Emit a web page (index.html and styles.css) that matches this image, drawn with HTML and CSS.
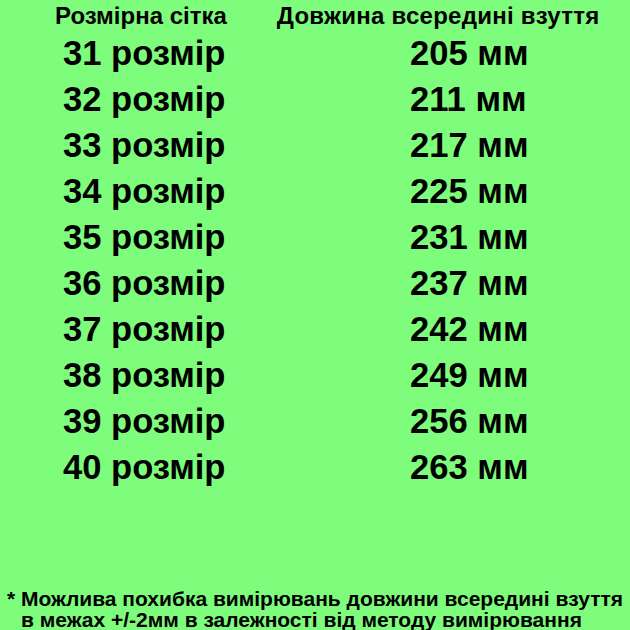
FILE: index.html
```html
<!DOCTYPE html>
<html lang="uk">
<head>
<meta charset="utf-8">
<link rel="stylesheet" href="styles.css">
</head>
<body>
<div class="page">
  <div class="head">
    <span class="h h-left">Розмірна сітка</span>
    <span class="h h-right">Довжина всередині взуття</span>
  </div>
  <div class="table">
    <div class="size">31 розмір</div><div class="len">205 мм</div>
    <div class="size">32 розмір</div><div class="len">211 мм</div>
    <div class="size">33 розмір</div><div class="len">217 мм</div>
    <div class="size">34 розмір</div><div class="len">225 мм</div>
    <div class="size">35 розмір</div><div class="len">231 мм</div>
    <div class="size">36 розмір</div><div class="len">237 мм</div>
    <div class="size">37 розмір</div><div class="len">242 мм</div>
    <div class="size">38 розмір</div><div class="len">249 мм</div>
    <div class="size">39 розмір</div><div class="len">256 мм</div>
    <div class="size">40 розмір</div><div class="len">263 мм</div>
  </div>
  <div class="note">
    <div class="n1">* Можлива похибка вимірювань довжини всередині взуття</div>
    <div class="n2">в межах +/-2мм в залежності від методу вимірювання</div>
  </div>
</div>
</body>
</html>
```
FILE: styles.css
```css
html, body {
  margin: 0;
  padding: 0;
  background: #7dfd7b;
}
.page {
  width: 630px;
  height: 630px;
  overflow: hidden;
  position: relative;
  font-family: "Liberation Sans", Arial, sans-serif;
  font-weight: bold;
  color: #000;
}
.head {
  display: flex;
  padding-left: 55px;
  padding-top: 3px;
  font-size: 24px;
  line-height: 26px;
  white-space: nowrap;
}
.h-right {
  margin-left: 50px;
  letter-spacing: 0.25px;
}
.table {
  display: grid;
  grid-template-columns: 347px auto;
  grid-auto-rows: 46px;
  padding-left: 63px;
  margin-top: 1px;
  font-size: 34.6px;
  line-height: 46px;
}
.note {
  position: absolute;
  left: 7px;
  top: 588px;
  font-size: 21px;
  line-height: 21px;
  white-space: nowrap;
}
.n2 {
  padding-left: 14px;
}
```
